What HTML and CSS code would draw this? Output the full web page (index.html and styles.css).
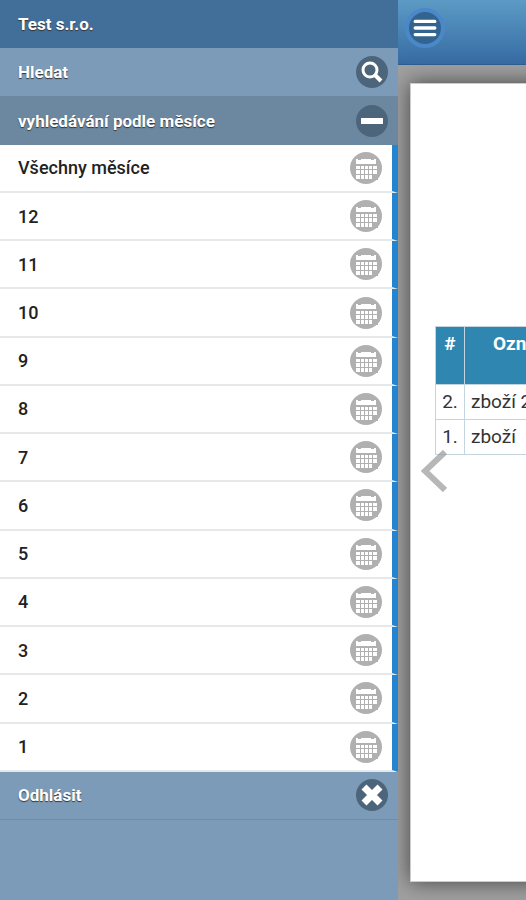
FILE: index.html
```html
<!DOCTYPE html>
<html lang="cs">
<head>
    <meta charset="UTF-8">
    <meta name="viewport" content="width=device-width, initial-scale=1">
    <title>Test s.r.o.</title>
    <link rel="stylesheet" href="styles.css">
</head>
<body>

<svg class="symbols" aria-hidden="true">
    <symbol id="calendar" viewBox="0 0 32 32">
        <circle cx="16" cy="16" r="16" fill="#b0b0b0"/>
        <path fill="#fff" d="M6 7h2v1h3V7h10v1h3V7h2v5H6z"/>
        <path fill="#fff" d="M6 13h21v9l-5 5H6z"/>
        <path fill="none" stroke="#b0b0b0" d="M6 13.500h21M6 17.500h21M6 22.500h21M10.500 14v13M14.500 14v13M18.500 14v13M22.500 14v13"/>
        <path fill="#b0b0b0" d="M23 23h5v5h-5z"/>
    </symbol>
</svg>

<div class="app">
    <nav class="panel">
        <ul class="menu" id="menu">
            <li class="title">Test s.r.o.</li>
            <li>
                <a href="#hledat">Hledat
                    <svg class="icon" viewBox="0 0 32 32"><circle class="disc" cx="16" cy="16" r="16"/><circle cx="14" cy="14" r="7" fill="none" stroke="#fff" stroke-width="3"/><path d="M19 19l6 6" stroke="#fff" stroke-width="4"/></svg>
                </a>
            </li>
            <li class="open">
                <a href="#mesice">vyhledávání podle měsíce
                    <svg class="icon" viewBox="0 0 32 32"><circle class="disc" cx="16" cy="16" r="16"/><path d="M5 13h22v6H5z" fill="#fff"/></svg>
                </a>
            </li>
            <li class="month"><a href="#vse">Všechny měsíce <svg class="icon"><use href="#calendar"/></svg></a></li>
            <li class="month"><a href="#m12">12 <svg class="icon"><use href="#calendar"/></svg></a></li>
            <li class="month"><a href="#m11">11 <svg class="icon"><use href="#calendar"/></svg></a></li>
            <li class="month"><a href="#m10">10 <svg class="icon"><use href="#calendar"/></svg></a></li>
            <li class="month"><a href="#m9">9 <svg class="icon"><use href="#calendar"/></svg></a></li>
            <li class="month"><a href="#m8">8 <svg class="icon"><use href="#calendar"/></svg></a></li>
            <li class="month"><a href="#m7">7 <svg class="icon"><use href="#calendar"/></svg></a></li>
            <li class="month"><a href="#m6">6 <svg class="icon"><use href="#calendar"/></svg></a></li>
            <li class="month"><a href="#m5">5 <svg class="icon"><use href="#calendar"/></svg></a></li>
            <li class="month"><a href="#m4">4 <svg class="icon"><use href="#calendar"/></svg></a></li>
            <li class="month"><a href="#m3">3 <svg class="icon"><use href="#calendar"/></svg></a></li>
            <li class="month"><a href="#m2">2 <svg class="icon"><use href="#calendar"/></svg></a></li>
            <li class="month"><a href="#m1">1 <svg class="icon"><use href="#calendar"/></svg></a></li>
            <li class="logout">
                <a href="#odhlasit">Odhlásit
                    <svg class="icon" viewBox="0 0 32 32"><circle class="disc" cx="16" cy="16" r="16"/><path d="M8 8l16 16M24 8L8 24" stroke="#fff" stroke-width="7"/></svg>
                </a>
            </li>
        </ul>
    </nav>

    <div class="content">
        <header class="topbar">
            <button class="menu-btn" type="button" aria-label="Menu" aria-controls="menu">
                <svg viewBox="0 0 22 16"><path d="M2 2h18M2 8h18M2 14h18" stroke="#fff" stroke-width="3" stroke-linecap="round"/></svg>
            </button>
        </header>
        <main class="desk">
            <div class="sheet">
                <table class="items">
                    <thead>
                        <tr><th class="num">#</th><th class="name">Ozn</th></tr>
                    </thead>
                    <tbody>
                        <tr><td class="num">2.</td><td>zboží 2</td></tr>
                        <tr><td class="num">1.</td><td>zboží</td></tr>
                    </tbody>
                </table>
                <button class="prev" type="button" aria-label="Předchozí">
                    <svg viewBox="0 0 26 42"><path d="M24 2L4 21l20 19" fill="none" stroke="#999" stroke-opacity=".7" stroke-width="6"/></svg>
                </button>
            </div>
        </main>
    </div>
</div>

</body>
</html>
```
FILE: styles.css
```css
* {
    box-sizing: border-box;
}

body {
    margin: 0;
    font-family: Roboto, sans-serif;
    font-size: 17px;
    overflow-x: hidden;
}

.symbols {
    display: none;
}

.app {
    display: flex;
    min-height: 100vh;
    overflow: hidden;
}

/* side panel */
.panel {
    flex: 0 0 398px;
    display: flex;
    z-index: 1;
    background: #7c9bb9;
}

.menu {
    flex: 1;
    display: grid;
    grid-auto-rows: 1fr;
    margin: 0;
    padding: 0 0 80px;
    list-style: none;
    font-weight: 700;
    color: #fff;
    text-shadow: 0 1px 1px #333;
}

.menu li {
    display: flex;
    align-items: center;
}

.menu a {
    flex: 1;
    display: flex;
    align-items: center;
    justify-content: space-between;
    padding: 0 10px 0 18px;
    color: inherit;
    text-decoration: none;
}

.menu .title {
    padding-left: 18px;
    background: #426f9a;
}

.menu .open {
    background: #6b88a0;
}

.menu .month {
    background: #fff;
    border-right: 6px solid #2583cf;
    border-bottom: 2px solid #e6e9ec;
    color: #222;
    font-size: 18px;
    font-weight: 500;
    text-shadow: none;
}

.menu .logout {
    border-bottom: 1px solid #6f8dab;
}

.icon {
    width: 32px;
    height: 32px;
}

.disc {
    fill: #4d657b;
}

/* page pushed aside by the panel */
.content {
    flex: 0 0 100%;
    display: flex;
    flex-direction: column;
}

.topbar {
    height: 65px;
    padding: 8px 7px;
    background: linear-gradient(#5c9bc5, #366ba3);
    border-bottom: 1px solid #2c5d92;
}

.menu-btn {
    display: flex;
    align-items: center;
    justify-content: center;
    width: 40px;
    height: 40px;
    padding: 0;
    background: #33638f;
    border: 4px solid #4b88c9;
    border-radius: 50%;
}

.menu-btn svg {
    width: 24px;
    height: 18px;
}

.desk {
    flex: 1;
    display: flex;
    padding: 18px 12px;
    background: #a0a0a0;
}

.sheet {
    flex: 1;
    position: relative;
    padding: 242px 24px;
    background: #fff;
    border: 1px solid #ccc;
    box-shadow: 0 0 20px #444;
}

.items {
    width: 100%;
    border-collapse: collapse;
    font-size: 19px;
    line-height: 22px;
    color: #333;
}

.items th,
.items td {
    padding: 6px;
    border: 1px solid #c3d5e1;
    text-align: left;
}

.items th {
    height: 58px;
    background: #2f86b0;
    color: #fff;
    vertical-align: top;
}

.items .num {
    width: 29px;
    text-align: center;
}

.items .name {
    padding-left: 28px;
}

/* arrow lies over the sheet */
.prev {
    position: absolute;
    top: 366px;
    left: 10px;
    padding: 0;
    background: none;
    border: 0;
}

.prev svg {
    display: block;
    width: 26px;
    height: 42px;
}
```
